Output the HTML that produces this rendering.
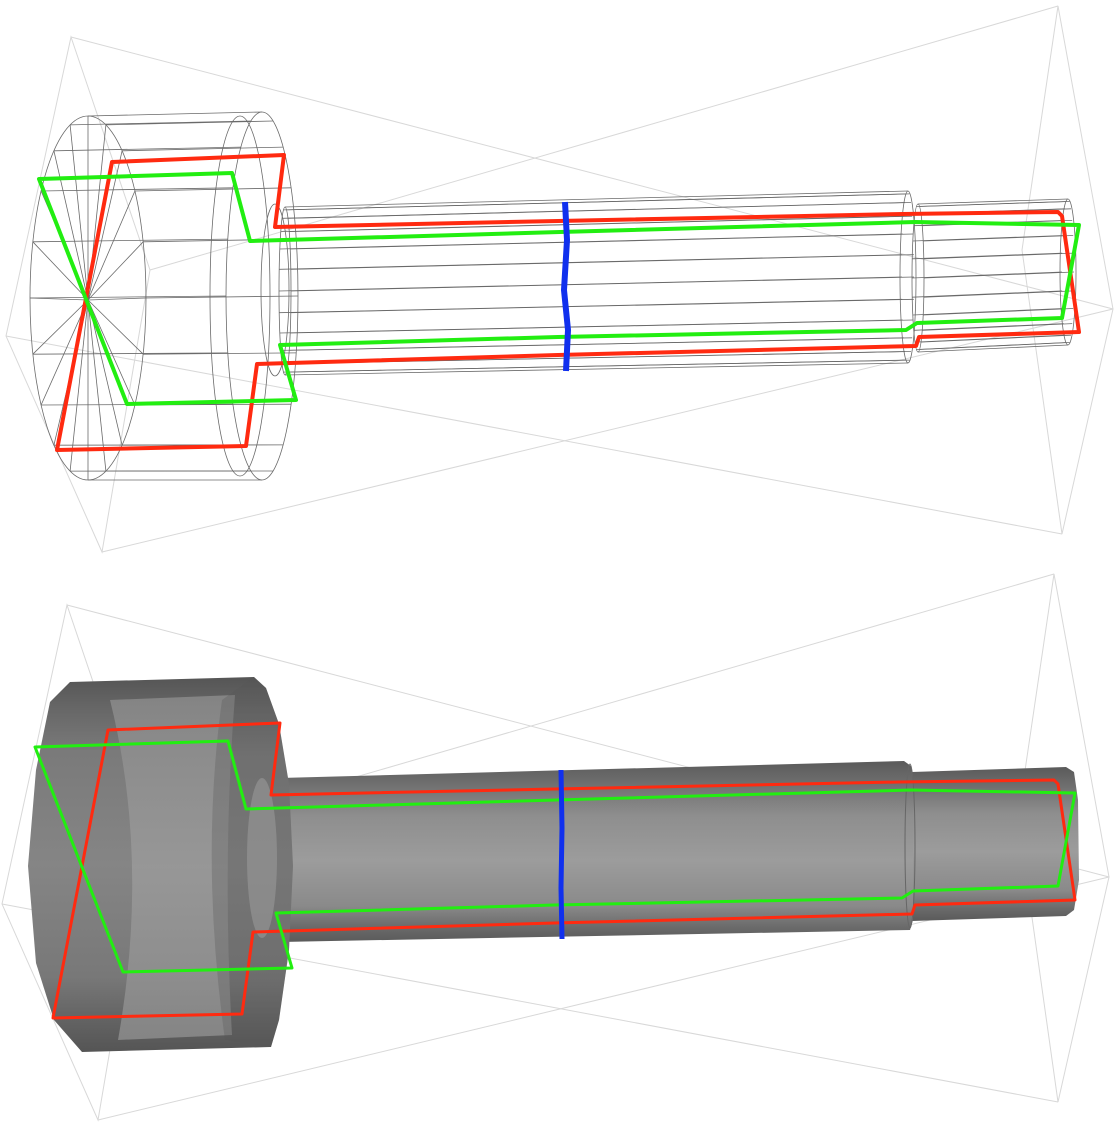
<!DOCTYPE html>
<html><head><meta charset="utf-8"><style>
html,body{margin:0;padding:0;background:#fff;}
svg{display:block}
</style></head><body>
<svg id="s" width="1118" height="1125" viewBox="0 0 1118 1125" xmlns="http://www.w3.org/2000/svg">
<defs>
<linearGradient id="shaft" x1="0" y1="0" x2="0" y2="1">
<stop offset="0" stop-color="#5a5a5a"/><stop offset="0.12" stop-color="#6e6e6e"/>
<stop offset="0.3" stop-color="#8e8e8e"/><stop offset="0.55" stop-color="#9c9c9c"/>
<stop offset="0.8" stop-color="#8a8a8a"/><stop offset="0.92" stop-color="#6a6a6a"/>
<stop offset="1" stop-color="#5a5a5a"/></linearGradient>
<linearGradient id="headv" x1="0" y1="0" x2="0" y2="1">
<stop offset="0" stop-color="#555"/><stop offset="0.08" stop-color="#666"/>
<stop offset="0.2" stop-color="#7a7a7a"/><stop offset="0.5" stop-color="#858585"/>
<stop offset="0.8" stop-color="#787878"/><stop offset="0.92" stop-color="#626262"/>
<stop offset="1" stop-color="#555"/></linearGradient>
<linearGradient id="mid" x1="0" y1="0" x2="0" y2="1">
<stop offset="0" stop-color="#8a8a8a"/><stop offset="0.5" stop-color="#9a9a9a"/><stop offset="1" stop-color="#8c8c8c"/></linearGradient>
</defs>

<g id="box" fill="none" stroke="#d8d8d8" stroke-width="1">
<polygon points="71,37 150,270 102,552 6,336"/>
<polygon points="1058,6 1113,309 1062,534 1022,250"/>
<line x1="71" y1="37" x2="1113" y2="309"/>
<line x1="150" y1="270" x2="1058" y2="6"/>
<line x1="102" y1="552" x2="1113" y2="309"/>
<line x1="6" y1="336" x2="1062" y2="534"/>
</g>
<g transform="translate(-4,568)" fill="none" stroke="#d8d8d8" stroke-width="1">
<polygon points="71,37 150,270 102,552 6,336"/>
<polygon points="1058,6 1113,309 1062,534 1022,250"/>
<line x1="71" y1="37" x2="1113" y2="309"/>
<line x1="150" y1="270" x2="1058" y2="6"/>
<line x1="102" y1="552" x2="1113" y2="309"/>
<line x1="6" y1="336" x2="1062" y2="534"/>
</g>

<g id="wire" fill="none" stroke="#6a6a6a" stroke-width="0.8"></g>

<!-- bottom solid -->
<g>
<polygon fill="url(#shaft)" points="912,772 1066,767 1074,772 1078,800 1079,880 1074,910 1066,916 912,921"/>
<polygon fill="url(#shaft)" points="280,778 904,761 911,766 913,780 913,920 910,930 280,942"/>
<ellipse cx="910" cy="846" rx="5" ry="82" fill="none" stroke="#666" stroke-width="1"/>
<polygon fill="url(#headv)" points="70,682 254,677 266,688 279,724 289,784 293,866 289,950 279,1020 271,1047 82,1052 54,1020 36,963 28,866 36,770 50,702"/>
<path fill="url(#mid)" d="M110,700 L235,695 Q222,860 232,1035 L118,1040 Q150,860 110,700 Z" opacity="0.85"/>
<path fill="#555" opacity="0.3" d="M222,700 Q200,860 225,1040 L271,1047 L279,1020 L289,950 L293,866 L289,784 L279,724 L266,688 L254,677 Z"/>
<ellipse cx="262" cy="858" rx="15" ry="80" fill="#9a9a9a" opacity="0.6"/>
</g>

<g id="lines" fill="none" stroke-linejoin="round">
<path stroke="#ff2a10" stroke-width="4" d="M112,162 L284,155 L275,227 L558,221 L903,214 L1058,212 L1062,216 L1079,332 L919,337 L916,346 L558,355 L257,364 L246,446 L57,450 Z"/>
<path stroke="#22ee11" stroke-width="4" d="M39,179 L232,173 L250,241 L560,232 L915,222 L1079,225 L1062,318 L917,323 L906,330 L558,337 L280,345 L296,400 L127,404 Z"/>
<path stroke="#1030ee" stroke-width="6" d="M565,202 L567,240 L564,290 L568,330 L566,371"/>
</g>
<g transform="translate(-4,568)" fill="none" stroke-linejoin="round">
<path stroke="#ff2a10" stroke-width="3" d="M112,162 L284,155 L275,227 L558,221 L903,214 L1058,212 L1062,216 L1079,332 L919,337 L916,346 L558,355 L257,364 L246,446 L57,450 Z"/>
<path stroke="#22ee11" stroke-width="3" d="M39,179 L232,173 L250,241 L560,232 L915,222 L1079,225 L1062,318 L917,323 L906,330 L558,337 L280,345 L296,400 L127,404 Z"/>
<path stroke="#1030ee" stroke-width="5" d="M565,202 L566,260 L565,320 L566,371"/>
</g>
</svg>
<script>
(function(){
var g=document.getElementById('wire'),o='';
function L(a,b,c,d){o+='<line x1="'+a.toFixed(1)+'" y1="'+b.toFixed(1)+'" x2="'+c.toFixed(1)+'" y2="'+d.toFixed(1)+'"/>';}
function E(cx,cy,rx,ry){o+='<ellipse cx="'+cx+'" cy="'+cy+'" rx="'+rx+'" ry="'+ry+'"/>';}
var N=20,i,t;
E(88,298,58,182);E(262,296,36,184);E(240,296,30,180);E(275,290,14,86);
for(i=0;i<N;i++){t=i/N*2*Math.PI;
 var fx=88+58*Math.cos(t),fy=298+182*Math.sin(t),bx=262+36*Math.cos(t),by=296+184*Math.sin(t);
 L(fx,fy,bx,by);L(88,300,fx,fy);}
for(i=0;i<24;i++){t=i/24*2*Math.PI;var s=Math.sin(t),c=Math.cos(t);
 L(285+6*c,291+84*s,908+6*c,277+86*s);
 L(918+6*c,278+74*s,1068+6*c,272+73*s);}
E(908,277,8,86);E(918,278,6,74);E(1068,272,8,73);E(285,291,6,84);
g.innerHTML=o;
})();
</script>
</body></html>
